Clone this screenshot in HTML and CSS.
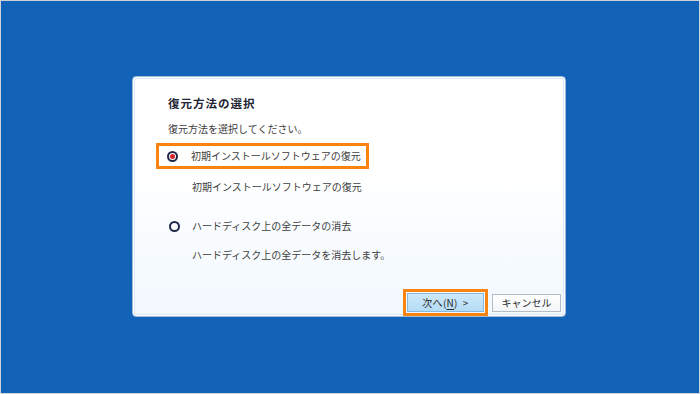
FILE: index.html
```html
<!DOCTYPE html>
<html lang="ja">
<head>
<meta charset="utf-8">
<link rel="stylesheet" href="styles.css">
</head>
<body>
<div class="screen">
  <div class="dialog">
    <div class="title">復元方法の選択</div>
    <div class="subtitle">復元方法を選択してください。</div>
    <div class="option highlight">
      <span class="radio checked"></span>
      <span class="label">初期インストールソフトウェアの復元</span>
    </div>
    <div class="desc desc1">初期インストールソフトウェアの復元</div>
    <div class="option option2">
      <span class="radio"></span>
      <span class="label">ハードディスク上の全データの消去</span>
    </div>
    <div class="desc desc2">ハードディスク上の全データを消去します。</div>
    <div class="buttons">
      <div class="next-frame"><div class="btn next">次へ(<u>N</u>)&nbsp;&nbsp;&gt;</div></div>
      <div class="btn cancel">キャンセル</div>
    </div>
  </div>
</div>
</body>
</html>
```
FILE: styles.css
```css
* { box-sizing: border-box; }
html, body { margin: 0; padding: 0; }
body {
  width: 700px;
  height: 394px;
  font-family: "Noto Sans CJK JP", "Noto Sans", sans-serif;
}
.screen {
  width: 700px;
  height: 394px;
  background: #1262b7;
  border: 1px solid #cfd3d8;
  display: flex;
  padding: 75px 0 0 131px;
}
.dialog {
  width: 434px;
  height: 241px;
  border: 1px solid #9fbbd8;
  border-radius: 4px;
  box-shadow: inset 0 0 0 1px #ffffff, inset 0 0 0 2px #dce9f6;
  background: linear-gradient(#ffffff 0%, #ffffff 40%, #f1f8fe 100%);
  display: flex;
  flex-direction: column;
  padding: 18px 3px 0 35px;
  color: #404040;
  font-size: 10px;
  line-height: 16px;
  white-space: nowrap;
}
.title {
  font-weight: bold;
  color: #1e2533;
  font-size: 11.5px;
  letter-spacing: 1px;
}
.subtitle { margin-top: 10px; }
.option {
  display: flex;
  align-items: center;
  height: 16px;
}
.highlight {
  margin-top: 6px;
  margin-left: -12px;
  width: 213px;
  height: 26px;
  border: 3px solid #fa8410;
  padding-left: 8px;
}
.radio {
  width: 11px;
  height: 11px;
  border-radius: 50%;
  border: 2px solid #1f2a48;
  background: #fff;
  display: flex;
  align-items: center;
  justify-content: center;
  flex: none;
}
.radio.checked::after {
  content: "";
  width: 5px;
  height: 5px;
  border-radius: 50%;
  background: #d8222a;
}
.label { margin-left: 13px; }
.option2 { margin-top: 23px; padding-left: 1px; }
.option2 .label { margin-left: 12px; }
.desc { padding-left: 24px; }
.desc1 { margin-top: 10px; }
.desc2 { margin-top: 13px; }
.buttons {
  margin-top: auto;
  display: flex;
  justify-content: flex-end;
  align-items: center;
  padding-right: 1px;
}
.next-frame {
  border: 3px solid #fa8410;
  padding: 1px;
  width: 85px;
  height: 27px;
  display: flex;
}
.btn {
  display: flex;
  align-items: center;
  justify-content: center;
  font-size: 10px;
  color: #2a2a2a;
}
.next {
  flex: 1;
  background: linear-gradient(#cde8fa, #b5dcf6);
  border: 1px solid #86b8dd;
  letter-spacing: 0.3px;
}
.next u { text-decoration-thickness: 1px; text-underline-offset: 2px; }
.cancel {
  margin-left: 4px;
  width: 69px;
  height: 18px;
  border: 1px solid #b4bcc6;
  background: linear-gradient(#ffffff, #f3f5f7);
}
```
